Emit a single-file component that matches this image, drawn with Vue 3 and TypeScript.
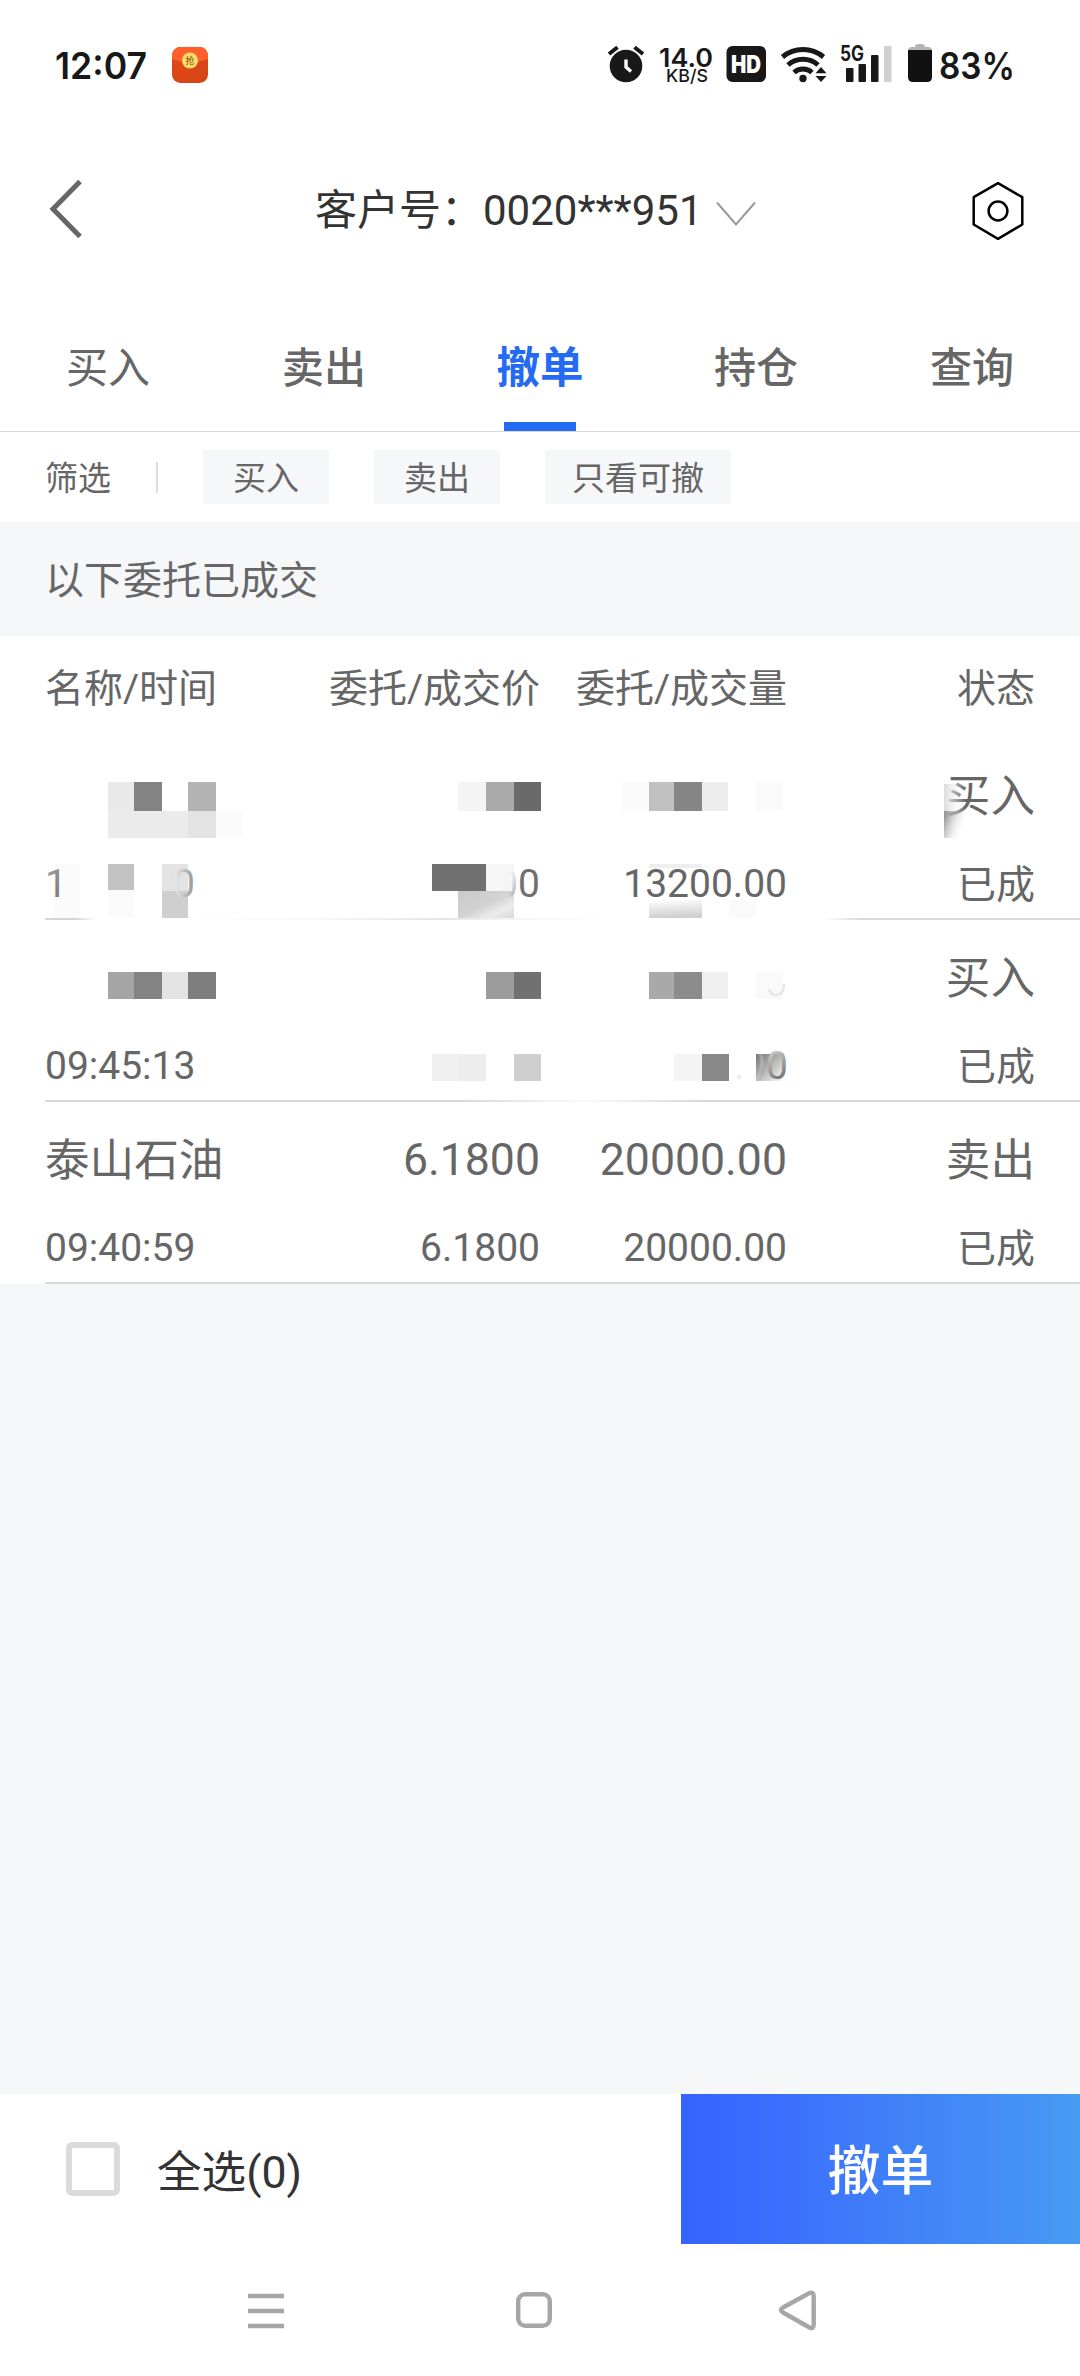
<script setup lang="ts">
interface Order {
  name: string
  time: string
  price: string
  dealPrice: string
  qty: string
  dealQty: string
  side: string
  status: string
  mask?: number
}
interface Block {
  x: number
  y: number
  w: number
  h: number
  c: string
}

const tabs = [
  { label: '买入', cls: '' },
  { label: '卖出', cls: 'medium' },
  { label: '撤单', cls: 'active' },
  { label: '持仓', cls: 'medium' },
  { label: '查询', cls: 'medium' },
]

const orders: Order[] = [
  { name: '', time: '', price: '', dealPrice: '', qty: '', dealQty: '13200.00', side: '买入', status: '已成', mask: 0 },
  { name: '', time: '09:45:13', price: '', dealPrice: '', qty: '', dealQty: '', side: '买入', status: '已成', mask: 1 },
  { name: '泰山石油', time: '09:40:59', price: '6.1800', dealPrice: '6.1800', qty: '20000.00', dealQty: '20000.00', side: '卖出', status: '已成' },
]

// Mosaic blocks hiding private values, relative to the top of each row
const b = (x: number, y: number, w: number, h: number, c: string): Block => ({ x, y, w, h, c })
const blocks: Block[][] = [
  [
    b(108, 44, 26, 29, '#e9e9e9'), b(134, 44, 28, 29, '#838383'), b(188, 44, 28, 29, '#b3b3b3'),
    b(108, 73, 80, 27, '#ebebeb'), b(188, 73, 28, 27, '#e3e3e3'), b(216, 73, 26, 27, '#fbfbfb'),
    b(54, 126, 26, 54, '#fbfbfb'), b(108, 126, 26, 26, '#c2c2c2'), b(108, 152, 26, 28, '#fbfbfb'),
    b(162, 126, 26, 27, '#e3e3e3'), b(162, 153, 26, 27, '#cecece'),
    b(458, 44, 28, 29, '#f4f4f4'), b(486, 44, 28, 29, '#aaaaaa'), b(514, 44, 27, 29, '#6a6a6a'),
    b(432, 126, 54, 27, '#717171'), b(486, 126, 28, 27, '#f6f6f6'), b(458, 153, 56, 27, 'url(#patch)'),
    b(622, 44, 27, 29, '#fafafa'), b(649, 44, 25, 29, '#c1c1c1'), b(674, 44, 28, 29, '#868686'),
    b(702, 44, 26, 29, '#ededed'), b(756, 45, 27, 28, '#fafafa'),
    b(649, 126, 53, 4, '#eeeeee'), b(649, 162, 53, 18, 'url(#rise)'), b(729, 162, 27, 18, '#fafafa'),
    b(944, 46, 22, 27, 'url(#sideLight)'), b(944, 73, 22, 27, 'url(#sideDark)'),
  ],
  [
    b(108, 52, 26, 27, '#a5a5a5'), b(134, 52, 28, 27, '#838383'), b(162, 52, 26, 27, '#e3e3e3'),
    b(188, 52, 28, 27, '#7e7e7e'), b(486, 52, 28, 27, '#9c9c9c'), b(514, 52, 27, 27, '#717171'),
    b(649, 52, 25, 27, '#a9a9a9'), b(674, 52, 28, 27, '#8c8c8c'), b(702, 52, 26, 27, '#f0f0f0'),
    b(756, 52, 27, 27, '#fafafa'),
    b(432, 134, 26, 27, '#f0f0f0'), b(458, 134, 28, 27, '#ededed'), b(514, 134, 27, 27, '#cfcfcf'),
    b(674, 134, 28, 27, '#f4f4f4'), b(702, 134, 27, 27, '#888888'), b(756, 134, 28, 27, 'url(#corner)'),
  ],
]
</script>

<template>
  <div class="screen">
    <header class="status">
      <svg width="1080" height="130" viewBox="0 0 1080 130">
        <defs>
          <linearGradient id="env" x1="0" y1="0" x2="1" y2="1">
            <stop offset="0" stop-color="#e04a18" />
            <stop offset="1" stop-color="#d54315" />
          </linearGradient>
        </defs>
        <g fill="#181818" class="sys">
          <text x="55" y="79" font-size="37.5" font-weight="600" textLength="92" lengthAdjust="spacingAndGlyphs">12:07</text>
          <text x="659" y="67" font-size="26" font-weight="600" textLength="54" lengthAdjust="spacingAndGlyphs">14.0</text>
          <text x="666" y="82" font-size="17.5" font-weight="500" textLength="42" lengthAdjust="spacingAndGlyphs">KB/S</text>
          <text x="939" y="79" font-size="37.5" font-weight="600" textLength="76" lengthAdjust="spacingAndGlyphs">83%</text>
          <text x="840" y="60.5" font-size="21" font-weight="700" textLength="24" lengthAdjust="spacingAndGlyphs">5G</text>
        </g>
        <!-- red packet -->
        <rect x="172" y="47" width="36" height="36" rx="8.5" fill="url(#env)" />
        <path d="M172 58V55.500A8.500 8.500 0 0 1 180.500 47H199.500A8.500 8.500 0 0 1 208 55.500V59Q190 66 172 59Z" fill="#ff5f2a" />
        <circle cx="190" cy="60.500" r="8" fill="#fbdc66" />
        <text x="190" y="64" font-size="9" text-anchor="middle" fill="#7b4a12" class="cjk">抢</text>
        <!-- alarm -->
        <circle cx="626" cy="66" r="16.300" fill="#181818" />
        <path d="M609 54L617.500 47.300M643 54L634.500 47.300" stroke="#181818" stroke-width="4" />
        <path d="M626 59.500V67L631 71.500" fill="none" stroke="#fff" stroke-width="3.400" />
        <!-- HD -->
        <rect x="726.500" y="46" width="39.500" height="36" rx="6" fill="#181818" />
        <text x="731" y="72.500" font-size="24" font-weight="900" fill="#fff" textLength="30" lengthAdjust="spacingAndGlyphs" class="sys">HD</text>
        <!-- wifi -->
        <g fill="none" stroke="#181818" stroke-width="5">
          <path d="M782.500 57A32 32 0 0 1 823.500 57" />
          <path d="M788 65A22.500 22.500 0 0 1 818 65" />
          <path d="M794 72.500A13.500 13.500 0 0 1 812 72.500" />
        </g>
        <circle cx="803" cy="78.500" r="3.700" fill="#181818" />
        <path d="M815.500 73.200L821 67L826.500 73.200ZM815.500 76L821 82L826.500 76Z" fill="#181818" stroke="#fff" stroke-width="1" paint-order="stroke" />
        <!-- signal -->
        <g fill="#181818">
          <rect x="846" y="68" width="7.500" height="14" rx="1" />
          <rect x="858.500" y="64" width="7.500" height="18" rx="1" />
          <rect x="871" y="55" width="7.500" height="27" rx="1" />
          <rect x="884" y="46" width="7.500" height="36" rx="1" fill="#d0d0d0" />
        </g>
        <!-- battery -->
        <path d="M908 51Q908 47 912 47H915Q915 44 918 44H922Q925 44 925 47H928Q932 47 932 51Z" fill="#b3b3b3" />
        <path d="M908 50H932V77Q932 82 927 82H913Q908 82 908 77Z" fill="#111" />
      </svg>
    </header>

    <div class="title-bar">
      <svg class="back" width="36" height="60" viewBox="0 0 36 60">
        <path d="M32 2.500L5 30L32 57.500" fill="none" stroke="#666" stroke-width="5" />
      </svg>
      <div class="account">
        <span>客户号：0020***951</span>
        <svg width="40" height="26" viewBox="0 0 40 26">
          <path d="M1 1.500L20 23.500L39 1.500" fill="none" stroke="#999" stroke-width="2" />
        </svg>
      </div>
      <svg class="gear" width="54" height="60" viewBox="0 0 54 60">
        <path d="M27 2.200L51.300 16.200V43.500L27 57.800L2.700 43.500V16.200Z" fill="none" stroke="#000" stroke-width="2.500" stroke-linejoin="round" />
        <circle cx="27" cy="30" r="9.400" fill="none" stroke="#000" stroke-width="2.500" />
      </svg>
    </div>

    <nav class="tabs">
      <div v-for="t in tabs" :key="t.label" class="tab" :class="t.cls">{{ t.label }}</div>
    </nav>

    <div class="filters">
      <span class="filter-label">筛选</span>
      <i class="divider"></i>
      <span class="chip">买入</span>
      <span class="chip">卖出</span>
      <span class="chip wide">只看可撤</span>
    </div>

    <div class="notice">以下委托已成交</div>

    <div class="head cols">
      <span>名称/时间</span><span>委托/成交价</span><span>委托/成交量</span><span>状态</span>
    </div>

    <div v-for="(o, i) in orders" :key="i" class="row">
      <div class="cols big">
        <span class="han">{{ o.name }}</span><span>{{ o.price }}</span><span>{{ o.qty }}</span><span class="han">{{ o.side }}</span>
      </div>
      <div class="cols small">
        <span>{{ o.time }}</span><span>{{ o.dealPrice }}</span><span>{{ o.dealQty }}</span><span class="han">{{ o.status }}</span>
      </div>
      <div class="rule" :class="'rule-' + i"></div>
      <svg v-if="o.mask !== undefined" class="mask" width="1080" height="182" viewBox="0 0 1080 182">
        <defs>
          <linearGradient id="patch" x1="0" y1="0" x2="1" y2="1">
            <stop offset="0" stop-color="#cacaca" />
            <stop offset=".5" stop-color="#d2d2d2" />
            <stop offset=".75" stop-color="#ececec" />
            <stop offset="1" stop-color="#d8d8d8" />
          </linearGradient>
          <linearGradient id="rise" x1="0" y1="0" x2="0.15" y2="1">
            <stop offset="0" stop-color="#fff" />
            <stop offset="1" stop-color="#cfcfcf" />
          </linearGradient>
          <linearGradient id="sideLight" x1="0" y1="0" x2="1" y2="0">
            <stop offset="0" stop-color="#dcdcdc" />
            <stop offset="1" stop-color="#fff" stop-opacity="0" />
          </linearGradient>
          <linearGradient id="sideDark" x1="0" y1="0.3" x2="0.9" y2="0.7">
            <stop offset="0" stop-color="#999" />
            <stop offset="1" stop-color="#fff" stop-opacity="0" />
          </linearGradient>
          <linearGradient id="corner" x1="0" y1="0" x2="1" y2="1">
            <stop offset="0" stop-color="#747474" />
            <stop offset="1" stop-color="#fff" />
          </linearGradient>
          <linearGradient id="fadeOne" x1="0" y1="0" x2="1" y2="1">
            <stop offset="0" stop-color="#aaa" />
            <stop offset="1" stop-color="#666" />
          </linearGradient>
          <linearGradient id="fadeZero" x1="0" y1="0" x2="1" y2="0">
            <stop offset="0" stop-color="#f2f2f2" />
            <stop offset="1" stop-color="#909090" />
          </linearGradient>
          <linearGradient id="fadeFirst" x1="0" y1="0.2" x2="1" y2="0.7">
            <stop offset=".45" stop-color="#fff" stop-opacity="0" />
            <stop offset="1" stop-color="#8a8a8a" />
          </linearGradient>
          <linearGradient id="fadeDown" x1="0" y1="0" x2="0.3" y2="1">
            <stop offset="0" stop-color="#e4e4e4" />
            <stop offset=".5" stop-color="#aaa" />
            <stop offset="1" stop-color="#666" />
          </linearGradient>
        </defs>
        <rect v-for="(r, k) in blocks[o.mask]" :key="k" :x="r.x" :y="r.y" :width="r.w" :height="r.h" :fill="r.c" />
        <g v-if="o.mask === 0" font-size="39">
          <text x="45" y="159" fill="url(#fadeOne)">1</text>
          <text x="173" y="159" fill="url(#fadeZero)">0</text>
          <text x="496" y="159" fill="url(#fadeFirst)">0</text>
          <text x="518" y="159" fill="#707070">0</text>
        </g>
        <g v-else font-size="39">
          <text x="734" y="159" fill="#ececec">.</text>
          <text x="744" y="159" fill="url(#fadeFirst)">0</text>
          <text x="766" y="159" fill="url(#fadeDown)">0</text>
          <path d="M769 69Q770 75 777 75Q784 74 784 64" fill="none" stroke="#e6e6e6" stroke-width="2.500" />
        </g>
      </svg>
    </div>

    <div class="blank"></div>

    <footer class="actions">
      <span class="box"></span>
      <span class="all">全选(0)</span>
      <button class="cancel">撤单</button>
    </footer>

    <div class="sysnav">
      <svg width="1080" height="132" viewBox="0 2244 1080 132" fill="none" stroke="#a6a6a6" stroke-width="4.400">
        <path d="M248 2296H284M248 2311H284M248 2326H284" />
        <rect x="518.200" y="2294.200" width="31.600" height="31.600" rx="7" />
        <path d="M783 2307.500L809.500 2293Q813.500 2291.500 813.700 2296V2325Q813.500 2329.500 809.500 2327.500L783 2312.500Q779 2310 783 2307.500Z" />
      </svg>
    </div>
  </div>
</template>

<style>
body { margin: 0; background: #fff; }
</style>

<style scoped>
.screen {
  width: 1080px;
  height: 2376px;
  display: flex;
  flex-direction: column;
  overflow: hidden;
  background: #fff;
  color: #666;
  font-family: Roboto, "Noto Sans CJK SC", sans-serif;
}
svg { display: block; flex: none; }
.status { height: 130px; }
.sys { font-family: Inter, sans-serif; }
.cjk { font-family: "Noto Sans CJK SC", sans-serif; }
.title-bar {
  height: 158px;
  flex: none;
  display: flex;
  align-items: center;
  padding: 0 55px 0 48px;
  box-sizing: border-box;
}
.account {
  flex: 1;
  display: flex;
  align-items: center;
  padding-left: 231px;
  color: #333;
  font-size: 42px;
  line-height: 60px;
}
.account span { padding-top: 4px; }
.account svg { margin: 9px 0 0 13px; }
.gear { margin-top: 3px; }
.tabs {
  height: 144px;
  flex: none;
  box-sizing: border-box;
  border-bottom: 1px solid #d8d8d8;
  display: flex;
}
.tab {
  flex: 1;
  position: relative;
  height: 143px;
  text-align: center;
  font-size: 42px;
  line-height: 162px;
}
.medium { font-weight: 500; }
.active { color: #246af3; font-weight: 700; font-size: 43.5px; }
.active::after {
  content: "";
  position: absolute;
  left: 72px;
  bottom: 0;
  width: 72px;
  height: 9px;
  background: #246af3;
}
.filters {
  height: 90px;
  flex: none;
  display: flex;
  align-items: center;
  padding-left: 45px;
  font-size: 33px;
  line-height: 58px;
}
.divider { width: 2px; height: 31px; background: #dcdcdc; margin: 0 45px; }
.chip { width: 126px; height: 54px; margin-right: 45px; background: #f5f7f9; text-align: center; }
.filter-label { height: 54px; }
.wide { width: 186px; }
.notice {
  height: 114px;
  flex: none;
  background: #f5f7f9;
  padding-left: 45px;
  font-size: 39px;
  line-height: 119px;
}
.cols {
  display: grid;
  grid-template-columns: 255px 240px 247px 248px;
  padding-left: 45px;
  text-align: right;
  white-space: nowrap;
}
.cols > span:first-child { text-align: left; }
.head { height: 102px; flex: none; font-size: 39px; line-height: 107px; }
.row {
  position: relative;
  height: 182px;
  flex: none;
  box-sizing: border-box;
  padding-top: 28px;
}
.big { height: 60px; font-size: 44.6px; line-height: 61px; }
.small { height: 60px; margin-top: 28px; font-size: 39px; line-height: 60px; }
.han { padding-top: 1px; }
.rule { height: 2px; margin: 4px 0 0 45px; background: #d8d9db; }
.rule-0 {
  background: linear-gradient(90deg, #d5d5d5 0, #d5d5d5 30px, #fff 52px, #fff 140px, #f8f8f8 270px, #e4e4e4 400px, #f4f4f4 470px, #fff 560px, #fff 780px, #d8d9db 815px);
}
.rule-1 {
  background: linear-gradient(90deg, #d8d9db 420px, #f0f0f0 500px, #fafafa 540px, #d8d9db 655px);
}
.mask { position: absolute; left: 0; top: 0; }
.blank { flex: 1; background: #f5f7f9; }
.actions { height: 150px; flex: none; display: flex; align-items: center; padding-left: 66px; }
.box { width: 54px; height: 54px; box-sizing: border-box; border: 6px solid #dbdbdb; border-radius: 6px; }
.all { flex: 1; margin-left: 37px; font-size: 44.6px; line-height: 60px; margin-top: 7px; color: #333; }
.cancel {
  width: 399px;
  height: 150px;
  border: 0;
  padding: 7px 0 0;
  background: linear-gradient(90deg, #3662ff, #489af3);
  color: #fff;
  font: 500 53px/143px Roboto, "Noto Sans CJK SC", sans-serif;
}
.sysnav { height: 132px; flex: none; }
</style>
